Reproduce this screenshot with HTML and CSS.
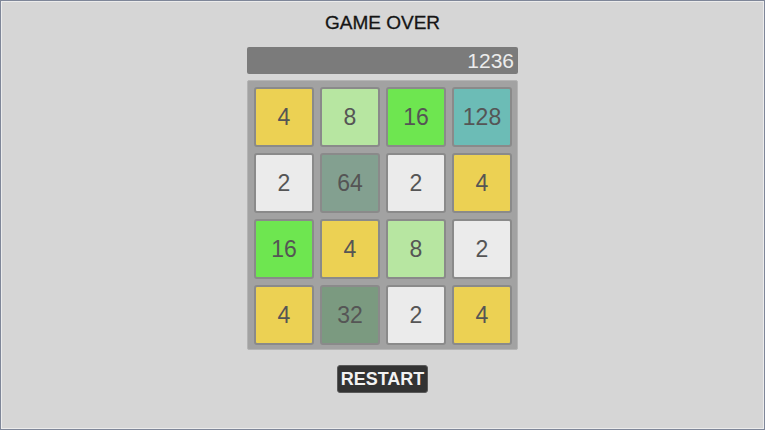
FILE: index.html
```html
<!DOCTYPE html>
<html lang="en">
<head>
  <meta charset="UTF-8" />
  <title>2048</title>
  <link rel="stylesheet" href="styles.css">
</head>
<body>

<div class="pantalla">
  <h1 class="titulo">GAME OVER</h1>
  <div class="marcador">1236</div>

  <div class="tablero">
    <div class="ficha v4">4</div>
    <div class="ficha v8">8</div>
    <div class="ficha v16">16</div>
    <div class="ficha v128">128</div>

    <div class="ficha v2">2</div>
    <div class="ficha v64">64</div>
    <div class="ficha v2">2</div>
    <div class="ficha v4">4</div>

    <div class="ficha v16">16</div>
    <div class="ficha v4">4</div>
    <div class="ficha v8">8</div>
    <div class="ficha v2">2</div>

    <div class="ficha v4">4</div>
    <div class="ficha v32">32</div>
    <div class="ficha v2">2</div>
    <div class="ficha v4">4</div>
  </div>

  <button class="btn">RESTART</button>
</div>

</body>
</html>
```

FILE: styles.css
```css
* { margin: 0; padding: 0; box-sizing: border-box; }

body {
  background-color: #d6d6d6;
  overflow: hidden;
  font-family: 'Liberation Sans', Arial, sans-serif;
}

.pantalla {
  width: 765px;
  height: 430px;
  border: 1px solid #7f8799;
  box-shadow: inset 0 0 0 1px #ececec;
  display: flex;
  flex-direction: column;
  align-items: center;
}

.titulo {
  font-size: 19px;
  font-weight: normal;
  color: #151515;
  margin-top: 12px;
  height: 20px;
  line-height: 20px;
  -webkit-text-stroke: 0.3px #151515;
}

.marcador {
  width: 271px;
  height: 27px;
  margin-top: 14px;
  background: #7b7b7b;
  border-radius: 2px;
  color: #ececec;
  font-size: 21px;
  line-height: 28px;
  text-align: right;
  padding-right: 4px;
}

.tablero {
  width: 271px;
  height: 270px;
  margin-top: 6px;
  background: #a2a2a2;
  border: 1px solid #b4b4b4;
  border-radius: 2px;
  padding: 6px;
  display: grid;
  grid-template-columns: repeat(4, 60px);
  grid-template-rows: repeat(4, 60px);
  gap: 6px;
}

.ficha {
  border: 2px solid #8a8a8a;
  border-radius: 3px;
  display: flex;
  justify-content: center;
  align-items: center;
  font-size: 23px;
  color: #555555;
}

.v2 { background: #ebebeb; }
.v4 { background: #ecd153; }
.v8 { background: #b7e6a1; }
.v16 { background: #6ee650; }
.v32 { background: #7b9a80; }
.v64 { background: #83a090; }
.v128 { background: #6cbcb6; }

.btn {
  margin-top: 15px;
  background-color: #333333;
  color: #f2f2f2;
  border: 1px solid #5a5a5a;
  border-radius: 3px;
  font-family: 'Liberation Sans', Arial, sans-serif;
  font-weight: bold;
  font-size: 18px;
  padding: 3px 3px;
  line-height: 20px;
}
```
